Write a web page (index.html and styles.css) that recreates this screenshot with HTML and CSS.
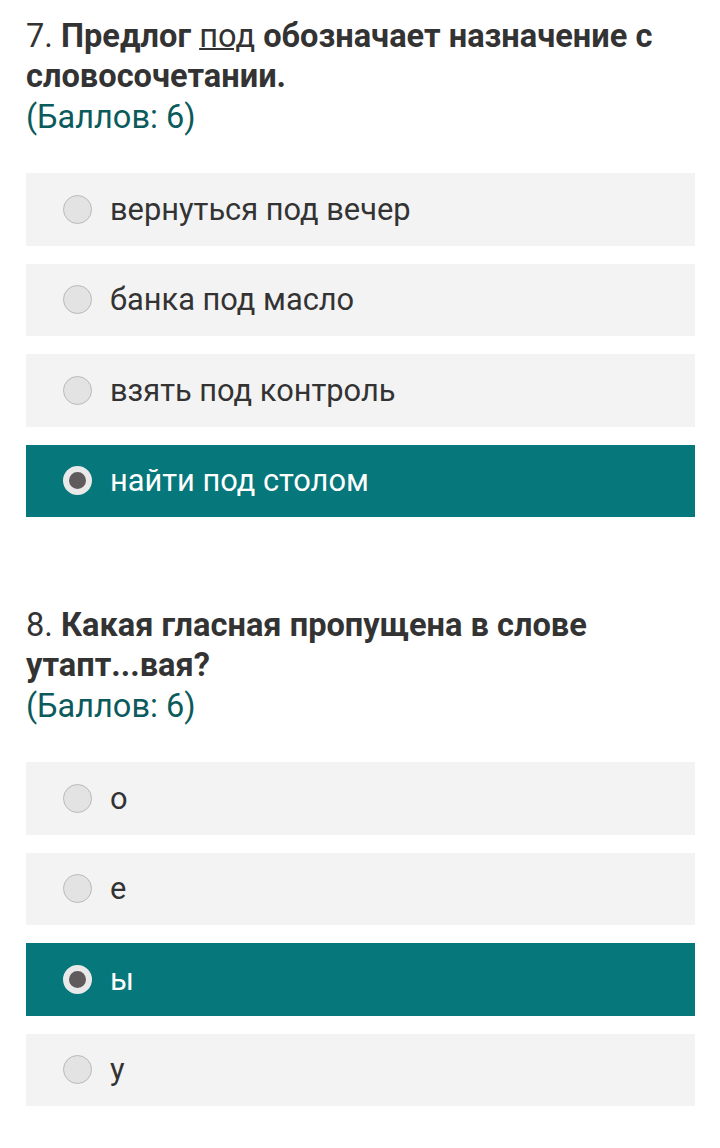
FILE: index.html
```html
<!DOCTYPE html>
<html lang="ru">
<head>
<meta charset="utf-8">
<link rel="stylesheet" href="styles.css">
</head>
<body>
<div class="page">
  <section class="question">
    <h2 class="q-title"><span class="num">7.</span> <b>Предлог</b> <u class="word">под</u> <b>обозначает назначение с словосочетании.</b></h2>
    <div class="points">(Баллов: 6)</div>
    <ul class="options">
      <li class="option"><span class="radio"></span><span class="label">вернуться под вечер</span></li>
      <li class="option"><span class="radio"></span><span class="label">банка под масло</span></li>
      <li class="option"><span class="radio"></span><span class="label">взять под контроль</span></li>
      <li class="option selected"><span class="radio"></span><span class="label">найти под столом</span></li>
    </ul>
  </section>
  <section class="question">
    <h2 class="q-title"><span class="num">8.</span> <b>Какая гласная пропущена в слове утапт...вая?</b></h2>
    <div class="points">(Баллов: 6)</div>
    <ul class="options">
      <li class="option"><span class="radio"></span><span class="label">о</span></li>
      <li class="option"><span class="radio"></span><span class="label">е</span></li>
      <li class="option selected"><span class="radio"></span><span class="label">ы</span></li>
      <li class="option"><span class="radio"></span><span class="label">у</span></li>
    </ul>
  </section>
</div>
</body>
</html>
```
FILE: styles.css
```css
html, body {
  margin: 0;
  padding: 0;
  background: #ffffff;
}
body {
  font-family: Roboto, "Noto Sans", sans-serif;
  color: #333333;
}
.page {
  padding: 16px 25px 0 26px;
}
.question {
  margin-bottom: 88px;
}
.q-title {
  margin: 0;
  font-size: 32.6px;
  line-height: 40px;
  font-weight: 400;
  color: #333333;
}
.q-title b {
  font-weight: 700;
}
.q-title .num {
  font-weight: 400;
}
.q-title .word {
  font-weight: 400;
  text-decoration-thickness: 2px;
}
.points {
  font-size: 32.5px;
  line-height: 42px;
  color: #0b5a5c;
  margin-bottom: 35px;
}
.options {
  list-style: none;
  margin: 0;
  padding: 0;
  display: flex;
  flex-direction: column;
  gap: 18px;
}
.option {
  height: 72.5px;
  background: #f3f3f3;
  display: flex;
  align-items: center;
  padding-left: 37px;
  font-size: 30.8px;
  color: #333333;
}
.radio {
  width: 27px;
  height: 27px;
  border-radius: 50%;
  background: #e3e3e3;
  border: 1px solid #b9b9b9;
  margin-right: 18px;
  flex: none;
  box-sizing: content-box;
}
.option.selected {
  background: #06777a;
  color: #ffffff;
}
.option.selected .radio {
  background: #5f5a5c;
  border: 6px solid #e9e9e9;
  width: 17px;
  height: 17px;
}
```
